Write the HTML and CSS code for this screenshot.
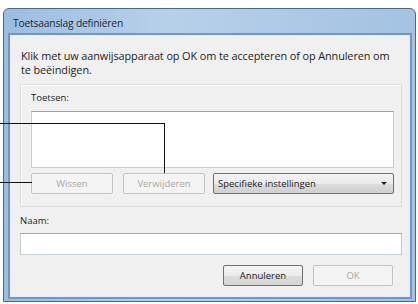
FILE: index.html
```html
<!DOCTYPE html>
<html lang="nl">
<head>
<meta charset="utf-8">
<title>Toetsaanslag definiëren</title>
<link rel="stylesheet" href="styles.css">
</head>
<body>
<div class="window">
  <div class="titlebar">Toetsaanslag definiëren</div>
  <div class="client">
    <p class="intro">Klik met uw aanwijsapparaat op OK om te accepteren of op Annuleren om te beëindigen.</p>
    <div class="group">
      <div class="label">Toetsen:</div>
      <div class="keys"></div>
      <div class="row">
        <button class="btn disabled">Wissen</button>
        <button class="btn disabled">Verwijderen</button>
        <div class="select">Specifieke instellingen<span class="arrow"></span></div>
      </div>
    </div>
    <div class="label">Naam:</div>
    <div class="input"></div>
    <div class="actions">
      <button class="btn">Annuleren</button>
      <button class="btn disabled">OK</button>
    </div>
  </div>
</div>
<div class="callout c1h"></div>
<div class="callout c1v"></div>
<div class="callout c2h"></div>
</body>
</html>
```
FILE: styles.css
```css
html, body {
  margin: 0;
  padding: 0;
  background: #ffffff;
  width: 418px;
  height: 304px;
  overflow: hidden;
  font-family: "Open Sans", "Noto Sans", sans-serif;
  font-size: 10px;
  color: #1e1e1e;
}
.window {
  margin: 8px 0 0 3px;
  width: 413px;
  height: 294px;
  box-sizing: border-box;
  border: 1px solid #4d6884;
  border-radius: 6px 6px 0 0;
  background: linear-gradient(to right, #9cbde0, #b8d0ea 40%, #a4c2e2);
  display: flex;
  flex-direction: column;
  padding: 0 6px 5px 7px;
}
.titlebar {
  height: 27px;
  flex: none;
  display: flex;
  align-items: center;
  padding-left: 2px;
  font-size: 10.3px;
  color: #1a2a3a;
  letter-spacing: -0.2px;
}
.client {
  flex: 1;
  background: #f0f0f0;
  box-shadow: 0 0 0 1px #e4eef8, 0 0 0 3px #6f98c4;
  display: flex;
  flex-direction: column;
  padding: 13px 7px 0 9px;
}
.intro {
  margin: 0 0 7px 1px;
  line-height: 14px;
  font-size: 10.9px;
  letter-spacing: -0.1px;
  padding-right: 8px;
}
.group {
  border: 1px solid #dcdcdc;
  box-shadow: inset 1px 1px 0 #ffffff;
  padding: 6px 7px 12px 10px;
  margin: 0 0 7px 0;
}
.label {
  height: 14px;
  line-height: 14px;
  font-size: 9.5px;
}
.keys {
  margin-top: 6px;
  height: 55px;
  background: #ffffff;
  border: 1px solid #c6cfd8;
  border-top-color: #98a2ad;
}
.row {
  margin-top: 5px;
  display: flex;
  gap: 10px;
}
.btn {
  font-family: inherit;
  font-size: 9.5px;
  height: 21px;
  width: 82px;
  border: 1px solid #707070;
  border-radius: 2px;
  background: linear-gradient(#f4f4f4, #ebebeb 50%, #dcdcdc 51%, #d4d4d4);
  color: #1e1e1e;
  padding: 0;
}
.btn.disabled {
  border-color: #c4c4c4;
  background: #f4f4f4;
  color: #a8a8a8;
}
.select {
  flex: 1;
  margin-left: -2px;
  height: 21px;
  box-sizing: border-box;
  border: 1px solid #707070;
  border-radius: 2px;
  background: linear-gradient(#f2f2f2, #ebebeb 50%, #dddddd 51%, #cfcfcf);
  display: flex;
  align-items: center;
  padding: 0 6px 0 4px;
  font-size: 9.5px;
}
.arrow {
  margin-left: auto;
  width: 0;
  height: 0;
  border-left: 3px solid transparent;
  border-right: 3px solid transparent;
  border-top: 3px solid #222;
}
.input {
  margin-top: 5px;
  height: 20px;
  background: #ffffff;
  border: 1px solid #c6cfd8;
  border-top-color: #a0a8b0;
}
.actions {
  margin-top: 10px;
  display: flex;
  justify-content: flex-end;
  gap: 10px;
  padding-right: 9px;
}
.actions .btn {
  width: 80px;
}
.callout {
  position: absolute;
  background: #111;
}
.c1h { left: 0; top: 123px; width: 165px; height: 1px; }
.c1v { left: 164px; top: 123px; width: 1px; height: 50px; }
.c2h { left: 0; top: 182px; width: 32px; height: 1px; }
```
